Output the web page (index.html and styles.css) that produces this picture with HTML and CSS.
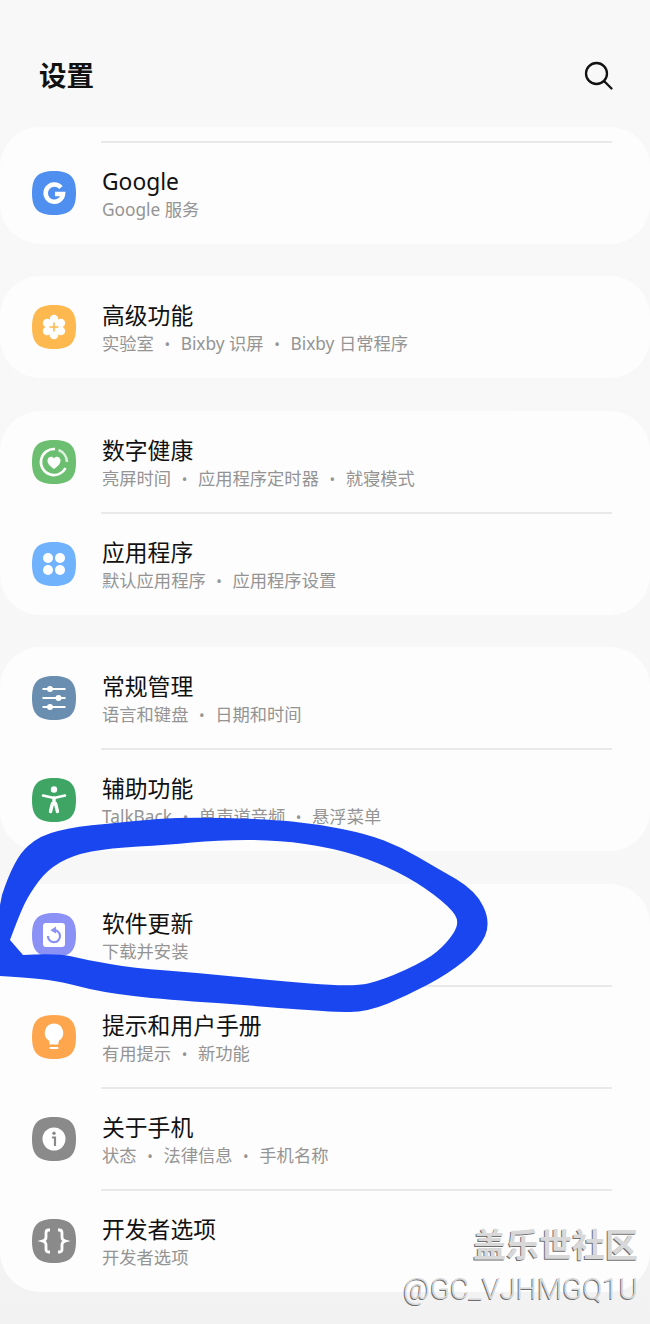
FILE: index.html
```html
<!DOCTYPE html>
<html lang="zh-CN">
<head>
  <meta charset="UTF-8">
  <title>设置</title>
  <meta name="viewport" content="width=device-width, initial-scale=1.0">
  <link rel="stylesheet" href="styles.css">
</head>
<body>

  <header class="top-bar">
    <h1>设置</h1>
    <svg class="search" viewBox="0 0 30 30" fill="none" stroke="#111" stroke-width="2.3" stroke-linecap="round">
      <circle cx="12.5" cy="12.5" r="10.5"/>
      <path d="M20.5 20.5L27.5 27.5"/>
    </svg>
  </header>

  <section class="card card-first">
    <div class="divider"></div>
    <div class="row">
      <svg class="icon" viewBox="0 0 44 44">
        <defs><path id="sq" d="M22 0C38 0 44 6 44 22C44 38 38 44 22 44C6 44 0 38 0 22C0 6 6 0 22 0Z"/></defs>
        <use href="#sq" fill="#4f8ff0"/>
        <path d="M29 16.5A8.7 8.7 0 1 0 31 23H23" fill="none" stroke="#fff" stroke-width="4.5"/>
      </svg>
      <div class="text">
        <div class="name">Google</div>
        <div class="sub">Google 服务</div>
      </div>
    </div>
  </section>

  <section class="card">
    <div class="row">
      <svg class="icon" viewBox="0 0 44 44">
        <use href="#sq" fill="#fdb94f"/>
        <g fill="#fff">
          <circle cx="22" cy="14" r="4.3"/><circle cx="22" cy="30" r="4.3"/>
          <circle cx="15.1" cy="18" r="4.3"/><circle cx="28.9" cy="18" r="4.3"/>
          <circle cx="15.1" cy="26" r="4.3"/><circle cx="28.9" cy="26" r="4.3"/>
          <circle cx="22" cy="22" r="6.5"/>
        </g>
        <path d="M22 17.5V26.5M17.5 22H26.5" stroke="#fdb94f" stroke-width="1.6"/>
      </svg>
      <div class="text">
        <div class="name">高级功能</div>
        <div class="sub">实验室<span class="dot">•</span>Bixby 识屏<span class="dot">•</span>Bixby 日常程序</div>
      </div>
    </div>
  </section>

  <section class="card">
    <div class="row">
      <svg class="icon" viewBox="0 0 44 44">
        <use href="#sq" fill="#6cbf71"/>
        <g fill="none" stroke="#fff" stroke-width="2.6">
          <path d="M23 9.1A13 13 0 1 0 33.5 28"/>
          <path d="M26.5 10A13 13 0 0 1 35 22" stroke-opacity=".75"/>
        </g>
        <path d="M22 29C17 25.5 15.5 23 15.5 20.5C15.5 16.5 20.5 15.5 22 18.5C23.5 15.5 28.5 16.5 28.5 20.5C28.5 23 27 25.5 22 29Z" fill="#fff"/>
      </svg>
      <div class="text">
        <div class="name">数字健康</div>
        <div class="sub">亮屏时间<span class="dot">•</span>应用程序定时器<span class="dot">•</span>就寝模式</div>
      </div>
    </div>
    <div class="divider"></div>
    <div class="row">
      <svg class="icon" viewBox="0 0 44 44">
        <use href="#sq" fill="#70b2fb"/>
        <g fill="#fff">
          <circle cx="16" cy="16" r="5"/><circle cx="28" cy="16" r="5"/>
          <circle cx="16" cy="28" r="5"/><circle cx="28" cy="28" r="5"/>
        </g>
      </svg>
      <div class="text">
        <div class="name">应用程序</div>
        <div class="sub">默认应用程序<span class="dot">•</span>应用程序设置</div>
      </div>
    </div>
  </section>

  <section class="card">
    <div class="row">
      <svg class="icon" viewBox="0 0 44 44">
        <use href="#sq" fill="#6a8eaf"/>
        <path d="M10.5 13H33.5M10.5 22H33.5M10.5 31H33.5" stroke="#fff" stroke-width="1.8"/>
        <g fill="#fff">
          <circle cx="18" cy="13" r="3"/><circle cx="26.5" cy="22" r="3"/><circle cx="18" cy="31" r="3"/>
        </g>
      </svg>
      <div class="text">
        <div class="name">常规管理</div>
        <div class="sub">语言和键盘<span class="dot">•</span>日期和时间</div>
      </div>
    </div>
    <div class="divider"></div>
    <div class="row">
      <svg class="icon" viewBox="0 0 44 44">
        <use href="#sq" fill="#3ea564"/>
        <circle cx="22" cy="11.5" r="3.2" fill="#fff"/>
        <g fill="none" stroke="#fff" stroke-linecap="round" stroke-linejoin="round">
          <path d="M11 17.5L22 20L33 17.5" stroke-width="2.6"/>
          <path d="M22 20V25.5M18.5 33.5L20.5 25.5H23.5L25.5 33.5" stroke-width="3.4"/>
        </g>
      </svg>
      <div class="text">
        <div class="name">辅助功能</div>
        <div class="sub">TalkBack<span class="dot">•</span>单声道音频<span class="dot">•</span>悬浮菜单</div>
      </div>
    </div>
  </section>

  <section class="card">
    <div class="row">
      <svg class="icon" viewBox="0 0 44 44">
        <use href="#sq" fill="#8c91f5"/>
        <rect x="11" y="10" width="22" height="24" rx="3" fill="#fff"/>
        <path d="M21 17.3A6 6 0 1 1 16 23" fill="none" stroke="#8c91f5" stroke-width="2.2"/>
        <path d="M24 13.5L18.5 17.2L24 20.5Z" fill="#8c91f5"/>
      </svg>
      <div class="text">
        <div class="name">软件更新</div>
        <div class="sub">下载并安装</div>
      </div>
    </div>
    <div class="divider"></div>
    <div class="row">
      <svg class="icon" viewBox="0 0 44 44">
        <use href="#sq" fill="#fda64d"/>
        <path d="M22 8.5A9.3 9.3 0 0 1 27 25.6L26.2 29.5H17.8L17 25.6A9.3 9.3 0 0 1 22 8.5Z" fill="#fff"/>
        <path d="M18.5 33H25.5" stroke="#fff" stroke-width="2.2" stroke-linecap="round"/>
      </svg>
      <div class="text">
        <div class="name">提示和用户手册</div>
        <div class="sub">有用提示<span class="dot">•</span>新功能</div>
      </div>
    </div>
    <div class="divider"></div>
    <div class="row">
      <svg class="icon" viewBox="0 0 44 44">
        <use href="#sq" fill="#8a8a8a"/>
        <circle cx="22" cy="22" r="11.5" fill="#fff"/>
        <circle cx="22" cy="16.3" r="1.7" fill="#8a8a8a"/>
        <path d="M20 20.5H23V29" fill="none" stroke="#8a8a8a" stroke-width="2.2"/>
      </svg>
      <div class="text">
        <div class="name">关于手机</div>
        <div class="sub">状态<span class="dot">•</span>法律信息<span class="dot">•</span>手机名称</div>
      </div>
    </div>
    <div class="divider"></div>
    <div class="row">
      <svg class="icon" viewBox="0 0 44 44">
        <use href="#sq" fill="#8a8a8a"/>
        <path d="M18 11H16.5Q14 11 14 14V18.5Q14 21 10.5 22Q14 23 14 25.5V30Q14 33 16.5 33H18M26 11H27.5Q30 11 30 14V18.5Q30 21 33.5 22Q30 23 30 25.5V30Q30 33 27.5 33H26" fill="none" stroke="#fff" stroke-width="2.8"/>
      </svg>
      <div class="text">
        <div class="name">开发者选项</div>
        <div class="sub">开发者选项</div>
      </div>
    </div>
  </section>

  <!-- hand drawn marker loop over the screenshot -->
  <svg class="scribble" viewBox="0 0 650 1324">
    <path fill="#1a46f0" fill-rule="evenodd" d="M0 976L0 905L2 895Q14 858 28 846Q40 835 58 831Q77 826 105 824Q133 821 158 819Q183 817 225 818Q267 819 292 821.5Q317 824 342 829Q367 834 384 840.5Q401 847 418 857Q435 867 456 879Q476 891 483 906Q491 922 485 936Q479 949 464 961Q448 974 428 984.5Q408 995 388 1003.5Q367 1012 350 1012Q333 1012 300 1009.5Q267 1007 217 1003Q167 1000 133.5 996Q100 992 81.5 987Q63 982 48 980Q33 978 0 976Z M10 940L23 955Q57 953 72 956.5Q87 960 110 964Q133 968 166.5 970.5Q200 973 233.5 976.5Q267 980 310 983.5Q353 987 368 983.5Q383 980 405 970Q427 960 437 951.5Q447 943 453.5 933Q460 923 455 915Q450 907 433.5 894.5Q417 882 397 872Q377 862 355 855Q333 848 305 844Q277 840 247 840Q217 840 192 842.5Q167 845 138.5 846.5Q110 848 91.5 851.5Q73 855 60 862.5Q47 870 38.5 881.5Q30 893 25 903Q20 913 10 940Z"/>
  </svg>

  <div class="watermark">
    <div class="wm-brand">盖乐世社区</div>
    <div class="wm-user">@GC_VJHMGQ1U</div>
  </div>

</body>
</html>
```

FILE: styles.css
```css
body {
  position: relative;
  width: 650px;
  height: 1324px;
  margin: 0;
  overflow: hidden;
  background: linear-gradient(#f8f8f8, #f7f7f7 75%, #f2f2f2);
  color: #111;
  font-family: "Noto Sans", "Noto Sans CJK SC", sans-serif;
}

.top-bar {
  display: flex;
  align-items: center;
  justify-content: space-between;
  height: 126.5px;
  padding: 0 36px 0 39px;
  box-sizing: border-box;
}

h1 {
  margin: 0 0 -22px;
  font-size: 27.5px;
  font-weight: 700;
}

.search {
  width: 30px;
  height: 30px;
  margin-bottom: -25px;
}

.card {
  margin-bottom: 32.5px;
  padding: 1px 0;
  background: #fdfdfd;
  border-radius: 40px;
}

.card-first {
  padding-top: 14px;
}

.row {
  display: flex;
  align-items: center;
  height: 100px;
  padding-left: 32px;
}

.divider {
  height: 2px;
  margin: 0 38px 0 101px;
  background: #e9e9e9;
}

.icon {
  flex: none;
  width: 44px;
  height: 44px;
  margin-right: 26px;
}

.text {
  padding-top: 6px;
}

.name {
  font-size: 22.8px;
  line-height: 28px;
  color: #111;
}

.sub {
  font-size: 17.3px;
  line-height: 28px;
  color: #949494;
}

.dot {
  display: inline-block;
  width: 26.8px;
  font-size: 15px;
  text-align: center;
}

.scribble {
  position: absolute;
  top: 0;
  left: 0;
  width: 650px;
  height: 1324px;
}

.watermark {
  position: absolute;
  right: 12px;
  top: 1224px;
  font-family: Roboto, "Noto Sans CJK SC", sans-serif;
  text-align: right;
  color: #d8d8d8;
  text-shadow: -1px 1px 0 #707070;
}

.wm-brand {
  font-size: 33px;
  font-weight: 700;
  line-height: 44px;
}

.wm-user {
  margin-top: 3px;
  font-size: 29.4px;
  font-weight: 300;
  line-height: 36px;
}
```
